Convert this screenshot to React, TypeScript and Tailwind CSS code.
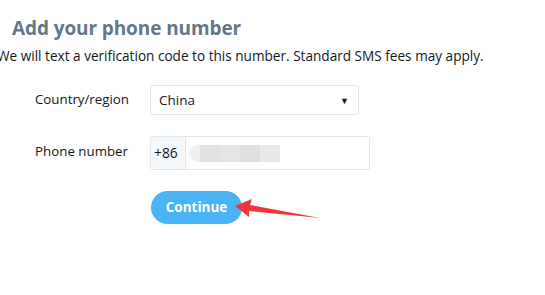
import React from "react";

export default function App() {
  return (
    <div
      className="relative w-[545px] h-[295px] overflow-hidden bg-white text-[#14171a]"
      style={{ fontFamily: '"Open Sans", "Noto Sans", sans-serif' }}
    >
      <div className="pt-[14px]">
        <h1 className="ml-[12px] text-[19px] leading-[28px] font-bold text-[#657786] tracking-[-0.1px]">
          Add your phone number
        </h1>
        <p className="ml-[-3px] mt-[5px] text-[13.6px] leading-[18px] text-[#14171a] whitespace-nowrap">
          We will text a verification code to this number. Standard SMS fees may apply.
        </p>
      </div>

      <div className="mt-[20px] grid grid-cols-[129px_auto] gap-x-[21px] items-center">
        <label className="text-right text-[13.3px] text-[#14171a]">Country/region</label>
        <div className="flex items-center justify-between w-[209px] h-[30px] border border-[#e1e8ed] rounded-[3px] pl-[8px] pr-[9px]">
          <span className="text-[13.5px]">China</span>
          <span className="text-[9px] leading-none">▼</span>
        </div>

        <label className="mt-[21px] text-right text-[13.3px] text-[#14171a] self-start pt-[6px] pr-[1px]">Phone number</label>
        <div className="mt-[21px] flex w-[220px] h-[34px] border border-[#e1e8ed] rounded-[3px] overflow-hidden">
          <div className="flex items-center w-[35px] bg-[#f5f8fa] border-r border-[#e1e8ed] pl-[3px] text-[13.8px]">
            +86
          </div>
          <div className="flex items-center pl-[3px]">
            <div className="flex h-[17px] mt-[1px]">
              <div className="w-[11px] bg-[#efefef] rounded-l-full" />
              <div className="w-[20px] bg-[#e1e1e1]" />
              <div className="w-[20px] bg-[#e4e4e3]" />
              <div className="w-[20px] bg-[#dfdfde]" />
              <div className="w-[20px] bg-[#e7e8e8]" />
            </div>
          </div>
        </div>

        <div />
        <div className="mt-[21px] ml-[1px]">
          <button className="w-[91px] h-[33px] rounded-full bg-[#4ab3f4] text-white font-bold text-[13.5px]">
            Continue
          </button>
        </div>
      </div>

      <svg
        className="absolute left-0 top-0"
        width="545"
        height="295"
        viewBox="0 0 545 295"
      >
        <polygon
          points="235,206 252,199 250,205 320,218 249,211 249,217"
          fill="#f5333a"
        />
      </svg>
    </div>
  );
}
